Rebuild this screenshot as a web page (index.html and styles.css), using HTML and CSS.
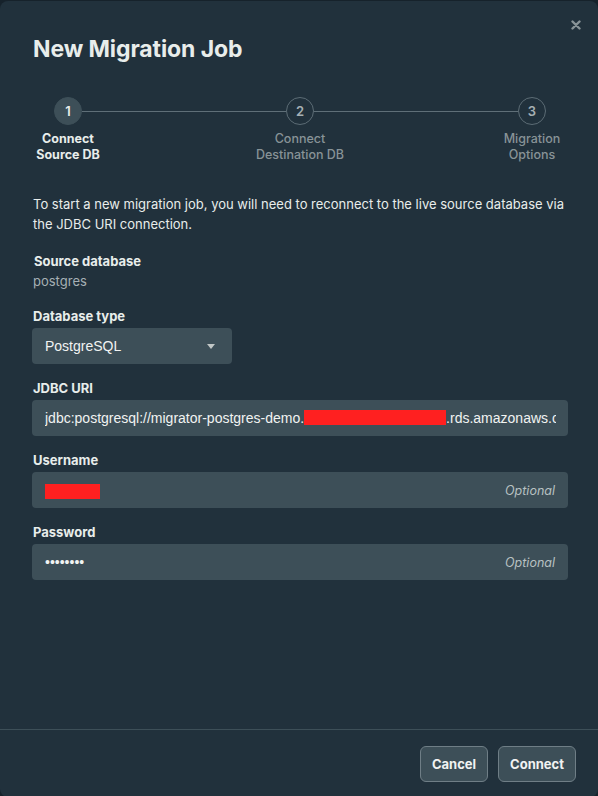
FILE: index.html
```html
<!DOCTYPE html>
<html>
<head>
<meta charset="utf-8">
<link rel="stylesheet" href="styles.css">
</head>
<body>
<div class="modal">
  <button class="close" aria-label="Close">
    <svg width="10" height="10" viewBox="0 0 10 10"><path d="M1.5 1.5 L8.5 8.5 M8.5 1.5 L1.5 8.5" stroke="#889397" stroke-width="2.4" stroke-linecap="round"/></svg>
  </button>
  <div class="body">
    <h1 class="title">New Migration Job</h1>

    <div class="stepper">
      <div class="circle active c1">1</div>
      <div class="line l1"></div>
      <div class="circle c3">2</div>
      <div class="line l2"></div>
      <div class="circle c5">3</div>
      <div class="step-label active s1">Connect<br>Source DB</div>
      <div class="step-label s3">Connect<br>Destination DB</div>
      <div class="step-label s5">Migration<br>Options</div>
    </div>

    <p class="desc">To start a new migration job, you will need to reconnect to the live source database via the JDBC URI connection.</p>

    <div class="info">
      <div class="label">Source database</div>
      <div class="value">postgres</div>
    </div>

    <div class="field">
      <div class="label">Database type</div>
      <div class="select">
        <span class="sys">PostgreSQL</span>
        <span class="caret"></span>
      </div>
    </div>

    <div class="field">
      <div class="label">JDBC URI</div>
      <div class="input">
        <div class="clip sys">jdbc:postgresql://migrator-postgres-demo.<span class="redact r-uri"></span>.rds.amazonaws.com:5432/postgres</div>
      </div>
    </div>

    <div class="field">
      <div class="label">Username</div>
      <div class="input">
        <div class="clip"><span class="redact r-user"></span></div>
        <span class="optional">Optional</span>
      </div>
    </div>

    <div class="field">
      <div class="label">Password</div>
      <div class="input">
        <div class="clip dots">••••••••</div>
        <span class="optional">Optional</span>
      </div>
    </div>
  </div>

  <div class="footer">
    <button class="btn">Cancel</button>
    <button class="btn">Connect</button>
  </div>
</div>
</body>
</html>
```

FILE: styles.css
```css
* { box-sizing: border-box; }
html, body { margin: 0; padding: 0; }
body {
  background: #16222b;
  width: 598px;
  height: 796px;
  font-family: "Inter", "Lato", sans-serif;
  color: #e8edeb;
  overflow: hidden;
}
.modal {
  position: relative;
  height: 796px;
  margin-top: 1px;
  background: #21313c;
  border-radius: 8px;
  display: flex;
  flex-direction: column;
}
.close {
  position: absolute;
  top: 19px;
  right: 17px;
  background: none;
  border: none;
  padding: 0;
  width: 10px;
  height: 10px;
  line-height: 0;
}
.body {
  flex: 1;
  padding: 32px 30px 0 32px;
}
.title {
  margin: 0;
  font-size: 23px;
  line-height: 32px;
  font-weight: 700;
  color: #e8edeb;
  letter-spacing: -0.1px;
  padding-left: 1px;
}
.stepper {
  margin-top: 32px;
  display: grid;
  grid-template-columns: 72px 1fr 72px 1fr 72px;
  grid-template-rows: 28px auto;
  row-gap: 6px;
  align-items: center;
}
.circle {
  justify-self: center;
  width: 28px;
  height: 28px;
  border-radius: 50%;
  border: 1px solid #5c6c75;
  display: flex;
  align-items: center;
  justify-content: center;
  font-size: 13px;
  font-weight: 600;
  color: #a6b0b4;
}
.circle.active {
  background: #3d4f58;
  border-color: #3d4f58;
  color: #e8edeb;
}
.c1 { grid-column: 1; grid-row: 1; }
.c3 { grid-column: 3; grid-row: 1; }
.c5 { grid-column: 5; grid-row: 1; }
.line {
  grid-row: 1;
  height: 1px;
  background: #5f6f78;
  margin: 0 -22px;
}
.l1 { grid-column: 2; }
.l2 { grid-column: 4; }
.step-label {
  grid-row: 2;
  justify-self: center;
  white-space: nowrap;
  text-align: center;
  font-size: 12.5px;
  line-height: 16px;
  color: #889397;
  font-weight: 500;
}
.step-label.active { color: #e8edeb; font-weight: 700; }
.s1 { grid-column: 1; }
.s3 { grid-column: 3; }
.s5 { grid-column: 5; }
.desc {
  margin: 31px 0 0 1px;
  font-size: 13px;
  line-height: 20px;
  color: #e8edeb;
}
.info { margin-top: 17px; padding-left: 1px; }
.label {
  font-size: 13px;
  line-height: 20px;
  font-weight: 700;
  color: #e8edeb;
  padding-left: 1px;
}
.value {
  font-size: 13px;
  line-height: 20px;
  color: #a6b0b4;
}
.info + .field { margin-top: 15px; }
.field + .field { margin-top: 14px; }
.field .label { margin-bottom: 2px; }
.sys { font-family: "Liberation Sans", Arial, sans-serif; }
.select {
  width: 200px;
  height: 36px;
  background: #3d4f58;
  border-radius: 4px;
  display: flex;
  align-items: center;
  justify-content: space-between;
  padding: 0 17px 0 13px;
  font-size: 14px;
  color: #f1f3f2;
}
.caret {
  width: 0;
  height: 0;
  border-left: 4.5px solid transparent;
  border-right: 4.5px solid transparent;
  border-top: 5px solid #c1c7c6;
}
.input {
  height: 36px;
  background: #3d4f58;
  border-radius: 4px;
  display: flex;
  align-items: center;
  padding: 0 12px 0 13px;
  font-size: 14px;
  color: #f1f3f2;
}
.clip {
  flex: 1;
  overflow: hidden;
  white-space: nowrap;
  line-height: 20px;
}
.redact {
  display: inline-block;
  background: #ff2020;
  vertical-align: middle;
}
.r-uri { width: 142px; height: 15px; margin-top: -3px; }
.r-user { width: 56px; height: 15px; margin-left: -1px; }
.dots {
  font-family: "Liberation Sans", Arial, sans-serif;
  font-size: 14px;
}
.optional {
  font-style: italic;
  font-size: 12.5px;
  color: #b8c1c2;
  padding-right: 1px;
}
.footer {
  border-top: 1px solid #3d4f58;
  padding: 16px 22px 15px 0;
  display: flex;
  justify-content: flex-end;
  gap: 10px;
}
.btn {
  height: 36px;
  padding: 0 11px;
  background: #3d4f58;
  border: 1px solid #6f7e86;
  border-radius: 6px;
  color: #f1f3f2;
  font-family: "Inter", "Lato", sans-serif;
  font-size: 13px;
  font-weight: 700;
}
```
